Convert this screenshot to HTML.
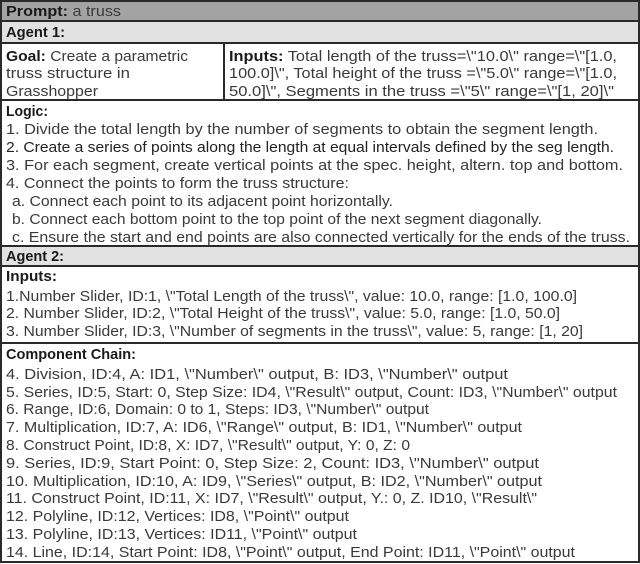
<!DOCTYPE html>
<html><head><meta charset="utf-8"><style>
html,body{margin:0;padding:0;background:#fff}
svg{display:block}
text{font-family:"Liberation Sans",sans-serif;font-size:15px;fill:#3a3a3a}
.b{font-weight:bold;fill:#1a1a1a}
</style></head><body>
<svg width="640" height="564" viewBox="0 0 640 564" xmlns="http://www.w3.org/2000/svg">
<rect x="0" y="0" width="640" height="21" fill="#a3a3a3"/>
<rect x="0" y="21" width="640" height="22" fill="#e2e2e2"/>
<rect x="0" y="246" width="640" height="20" fill="#e2e2e2"/>
<g stroke="#2a2a2a" stroke-width="2" fill="none">
<rect x="1" y="1" width="638" height="561"/>
<line x1="0" y1="21" x2="640" y2="21"/>
<line x1="0" y1="43" x2="640" y2="43"/>
<line x1="0" y1="100" x2="640" y2="100"/>
<line x1="0" y1="246" x2="640" y2="246"/>
<line x1="0" y1="266" x2="640" y2="266"/>
<line x1="0" y1="343" x2="640" y2="343"/>
<line x1="224" y1="43" x2="224" y2="100"/>
</g>
<text x="6" y="16" textLength="115" lengthAdjust="spacingAndGlyphs"><tspan class="b">Prompt:</tspan> a truss</text>
<text x="6" y="37" textLength="59" lengthAdjust="spacingAndGlyphs" class="b">Agent 1:</text>
<text x="6" y="61" textLength="182" lengthAdjust="spacingAndGlyphs"><tspan class="b">Goal:</tspan> Create a parametric</text>
<text x="6" y="78" textLength="124" lengthAdjust="spacingAndGlyphs">truss structure in</text>
<text x="6" y="96" textLength="92" lengthAdjust="spacingAndGlyphs">Grasshopper</text>
<text x="229" y="61" textLength="388" lengthAdjust="spacingAndGlyphs"><tspan class="b">Inputs:</tspan> Total length of the truss=\"10.0\" range=\"[1.0,</text>
<text x="229" y="78" textLength="388" lengthAdjust="spacingAndGlyphs">100.0]\", Total height of the truss =\"5.0\" range=\"[1.0,</text>
<text x="229" y="96" textLength="385" lengthAdjust="spacingAndGlyphs">50.0]\", Segments in the truss =\"5\" range=\"[1, 20]\"</text>
<text x="6" y="116" textLength="42" lengthAdjust="spacingAndGlyphs" class="b">Logic:</text>
<text x="6" y="134" textLength="592" lengthAdjust="spacingAndGlyphs">1. Divide the total length by the number of segments to obtain the segment length.</text>
<text x="6" y="152" textLength="608" lengthAdjust="spacingAndGlyphs" style="fill:#222">2. Create a series of points along the length at equal intervals defined by the seg length.</text>
<text x="6" y="170" textLength="617" lengthAdjust="spacingAndGlyphs">3. For each segment, create vertical points at the spec. height, altern. top and bottom.</text>
<text x="6" y="188" textLength="343" lengthAdjust="spacingAndGlyphs">4. Connect the points to form the truss structure:</text>
<text x="12" y="206" textLength="381" lengthAdjust="spacingAndGlyphs">a. Connect each point to its adjacent point horizontally.</text>
<text x="12" y="224" textLength="530" lengthAdjust="spacingAndGlyphs">b. Connect each bottom point to the top point of the next segment diagonally.</text>
<text x="12" y="242" textLength="618" lengthAdjust="spacingAndGlyphs">c. Ensure the start and end points are also connected vertically for the ends of the truss.</text>
<text x="6" y="261" textLength="58" lengthAdjust="spacingAndGlyphs" class="b">Agent 2:</text>
<text x="6" y="281" textLength="51" lengthAdjust="spacingAndGlyphs" class="b">Inputs:</text>
<text x="6" y="301" textLength="571" lengthAdjust="spacingAndGlyphs">1.Number Slider, ID:1, \"Total Length of the truss\", value: 10.0, range: [1.0, 100.0]</text>
<text x="6" y="318" textLength="554" lengthAdjust="spacingAndGlyphs">2. Number Slider, ID:2, \"Total Height of the truss\", value: 5.0, range: [1.0, 50.0]</text>
<text x="6" y="336" textLength="577" lengthAdjust="spacingAndGlyphs">3. Number Slider, ID:3, \"Number of segments in the truss\", value: 5, range: [1, 20]</text>
<text x="6" y="359" textLength="130" lengthAdjust="spacingAndGlyphs" class="b">Component Chain:</text>
<text x="6" y="379" textLength="502" lengthAdjust="spacingAndGlyphs">4. Division, ID:4, A: ID1, \"Number\" output, B: ID3, \"Number\" output</text>
<text x="6" y="397" textLength="611" lengthAdjust="spacingAndGlyphs">5. Series, ID:5, Start: 0, Step Size: ID4, \"Result\" output, Count: ID3, \"Number\" output</text>
<text x="6" y="414" textLength="423" lengthAdjust="spacingAndGlyphs">6. Range, ID:6, Domain: 0 to 1, Steps: ID3, \"Number\" output</text>
<text x="6" y="432" textLength="516" lengthAdjust="spacingAndGlyphs">7. Multiplication, ID:7, A: ID6, \"Range\" output, B: ID1, \"Number\" output</text>
<text x="6" y="450" textLength="404" lengthAdjust="spacingAndGlyphs">8. Construct Point, ID:8, X: ID7, \"Result\" output, Y: 0, Z: 0</text>
<text x="6" y="468" textLength="533" lengthAdjust="spacingAndGlyphs">9. Series, ID:9, Start Point: 0, Step Size: 2, Count: ID3, \"Number\" output</text>
<text x="6" y="486" textLength="536" lengthAdjust="spacingAndGlyphs">10. Multiplication, ID:10, A: ID9, \"Series\" output, B: ID2, \"Number\" output</text>
<text x="6" y="503" textLength="531" lengthAdjust="spacingAndGlyphs">11. Construct Point, ID:11, X: ID7, \"Result\" output, Y.: 0, Z. ID10, \"Result\"</text>
<text x="6" y="521" textLength="343" lengthAdjust="spacingAndGlyphs">12. Polyline, ID:12, Vertices: ID8, \"Point\" output</text>
<text x="6" y="539" textLength="351" lengthAdjust="spacingAndGlyphs">13. Polyline, ID:13, Vertices: ID11, \"Point\" output</text>
<text x="6" y="557" textLength="569" lengthAdjust="spacingAndGlyphs">14. Line, ID:14, Start Point: ID8, \"Point\" output, End Point: ID11, \"Point\" output</text>
</svg>
</body></html>
